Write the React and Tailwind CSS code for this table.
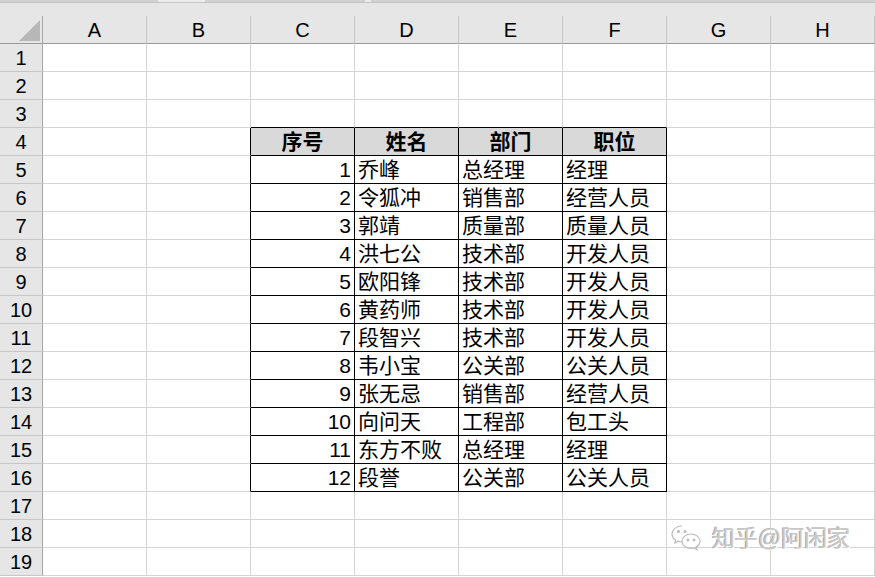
import React from "react"

const cols = ["A", "B", "C", "D", "E", "F", "G", "H"]

const people = [
  [1, "乔峰", "总经理", "经理"],
  [2, "令狐冲", "销售部", "经营人员"],
  [3, "郭靖", "质量部", "质量人员"],
  [4, "洪七公", "技术部", "开发人员"],
  [5, "欧阳锋", "技术部", "开发人员"],
  [6, "黄药师", "技术部", "开发人员"],
  [7, "段智兴", "技术部", "开发人员"],
  [8, "韦小宝", "公关部", "公关人员"],
  [9, "张无忌", "销售部", "经营人员"],
  [10, "向问天", "工程部", "包工头"],
  [11, "东方不败", "总经理", "经理"],
  [12, "段誉", "公关部", "公关人员"],
]

const font = { fontFamily: '"Liberation Sans", "Noto Sans CJK SC", sans-serif' }

function Cell({ row, col }) {
  // table lives in C..F (index 2..5), rows 4..16
  const inTable = row >= 4 && row <= 16 && col >= 2 && col <= 5
  const leftOfTable = row >= 4 && row <= 16 && col === 1
  const aboveTable = row === 3 && col >= 2 && col <= 5

  const rightBlack = inTable || leftOfTable
  const bottomBlack = inTable || aboveTable

  let content = null
  let align = "justify-start pl-[3px]"
  let bg = "bg-white"

  if (row === 4 && inTable) {
    content = ["序号", "姓名", "部门", "职位"][col - 2]
    align = "justify-center font-bold"
    bg = "bg-[#d9d9d9]"
  } else if (inTable) {
    const p = people[row - 5]
    content = p[col - 2]
    if (col === 2) align = "justify-end pr-[3px]"
  }

  return (
    <div
      className={`w-[104px] h-[28px] flex items-end pb-[1px] text-[21px] leading-[24px] text-black border-r border-b ${bg} ${align} ${
        rightBlack ? "border-r-black" : "border-r-[#d4d4d4]"
      } ${bottomBlack ? "border-b-black" : "border-b-[#d4d4d4]"}`}
    >
      {content}
    </div>
  )
}

export default function App() {
  const rows = Array.from({ length: 19 }, (_, i) => i + 1)

  return (
    <div className="relative w-[875px] h-[577px] overflow-hidden bg-white" style={font}>
      {/* remnant of the formula bar */}
      <div className="h-[16px] bg-[#e6e6e6] flex flex-col">
        <div className="h-[2px] flex">
          <div className="w-[158px] bg-[#d2d2d2]"></div>
          <div className="w-[47px] bg-[#ececec]"></div>
          <div className="w-[160px] bg-[#d2d2d2]"></div>
          <div className="w-[6px] bg-[#ececec]"></div>
          <div className="flex-1 bg-[#d2d2d2]"></div>
        </div>
        <div className="h-[1px] bg-[#c4c4c4]"></div>
      </div>

      {/* column headers */}
      <div className="flex">
        <div className="w-[43px] h-[28px] bg-[#e6e6e6] border-r border-b border-r-[#a6a6a6] border-b-[#9b9b9b] relative">
          <svg className="absolute left-[19px] top-[4px]" width="21" height="21" viewBox="0 0 21 21">
            <polygon points="21,0 21,21 0,21" fill="#b7b7b7" />
          </svg>
        </div>
        {cols.map((c) => (
          <div
            key={c}
            className="w-[104px] h-[28px] bg-[#e6e6e6] border-r border-b border-r-[#c6c6c6] border-b-[#9b9b9b] flex items-end justify-center pb-[1px] text-[20px] leading-[23px] text-black"
          >
            {c}
          </div>
        ))}
      </div>

      {/* grid rows */}
      {rows.map((r) => (
        <div key={r} className="flex">
          <div className="w-[43px] h-[28px] bg-[#e6e6e6] border-r border-b border-r-[#a6a6a6] border-b-[#c6c6c6] flex items-end justify-center pb-[1px] text-[20px] leading-[23px] text-black">
            {r}
          </div>
          {cols.map((c, ci) => (
            <Cell key={c} row={r} col={ci} />
          ))}
        </div>
      ))}

      {/* watermark */}
      <div className="absolute left-[670px] top-[522px] flex items-center gap-[10px] pointer-events-none">
        <svg width="32" height="32" viewBox="0 0 32 32" fill="none" stroke="#bcbcbc" strokeWidth="1.2">
          <path d="M12 4c-5.5 0-10 3.6-10 8 0 2.5 1.4 4.6 3.6 6.1L4.8 21l3.4-1.8c1.2.4 2.5.6 3.8.6" />
          <circle cx="8.5" cy="9.5" r="1" fill="#bcbcbc" />
          <circle cx="15" cy="9.5" r="1" fill="#bcbcbc" />
          <path d="M21 12c-5 0-9 3.2-9 7.2s4 7.2 9 7.2c1 0 2-.1 2.9-.4l3 1.6-.7-2.6c2-1.3 3.8-3.4 3.8-5.8 0-4-4-7.2-9-7.2z" />
          <circle cx="18" cy="18" r="0.9" fill="#bcbcbc" />
          <circle cx="24" cy="18" r="0.9" fill="#bcbcbc" />
        </svg>
        <span className="text-[23px] leading-[28px] text-[#c8c8c8] [text-shadow:1px_1px_0_#ffffff,-1px_0_0_#a8a8a8]">
          知乎@阿闲家
        </span>
      </div>
    </div>
  )
}
